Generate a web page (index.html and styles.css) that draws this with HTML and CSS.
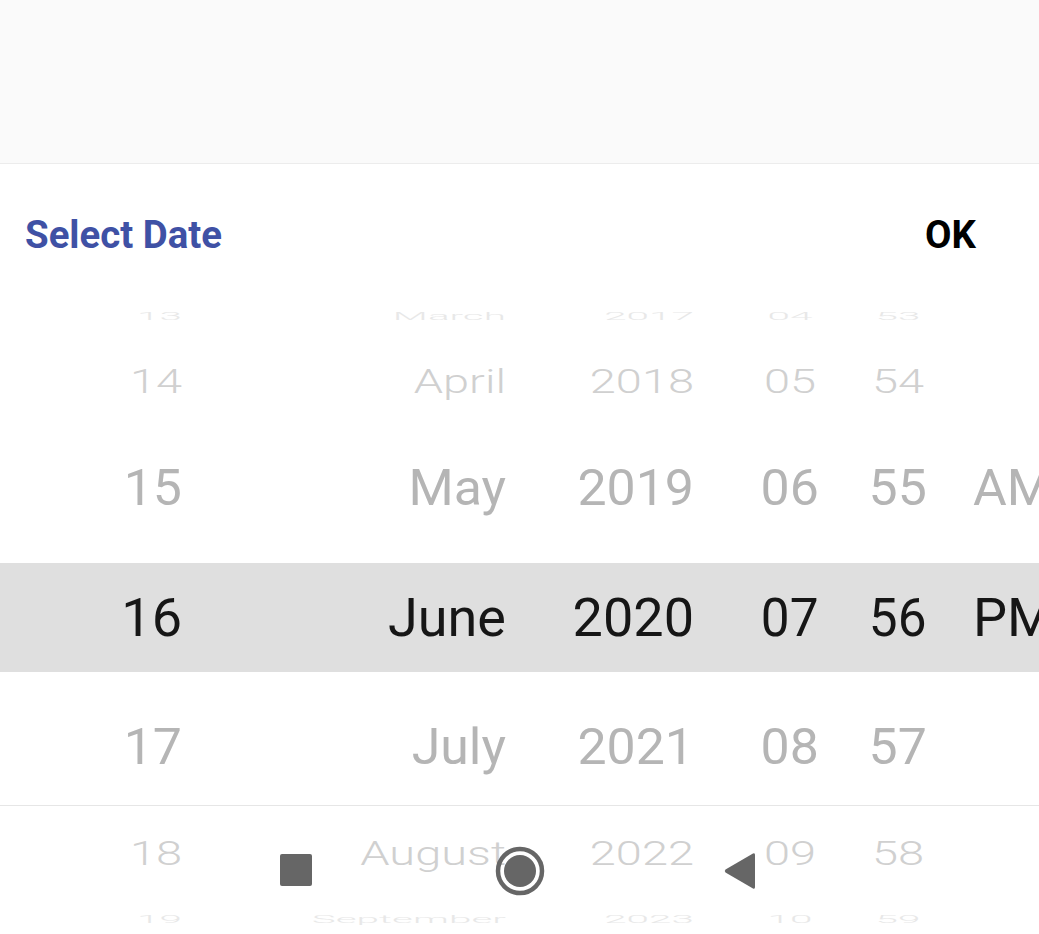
FILE: index.html
```html
<!DOCTYPE html>
<html lang="en">
<head>
  <meta charset="UTF-8">
  <meta name="viewport" content="width=device-width, initial-scale=1.0">
  <title>Select Date</title>
  <link rel="stylesheet" href="styles.css">
</head>
<body>
  <div class="backdrop"></div>
  <div class="sheet">
    <header class="sheet-header">
      <h2 class="sheet-title">Select Date</h2>
      <button class="ok-button">OK</button>
    </header>
    <div class="wheel">
      <div class="wheel-row far top">
        <span>13</span><span>March</span><span>2017</span><span>04</span><span>53</span><span></span>
      </div>
      <div class="wheel-row near top">
        <span>14</span><span>April</span><span>2018</span><span>05</span><span>54</span><span></span>
      </div>
      <div class="wheel-row close top">
        <span>15</span><span>May</span><span>2019</span><span>06</span><span>55</span><span>AM</span>
      </div>
      <div class="wheel-row current">
        <span>16</span><span>June</span><span>2020</span><span>07</span><span>56</span><span>PM</span>
      </div>
      <div class="wheel-row close bottom">
        <span>17</span><span>July</span><span>2021</span><span>08</span><span>57</span><span></span>
      </div>
      <div class="wheel-row near bottom">
        <span>18</span><span>August</span><span>2022</span><span>09</span><span>58</span><span></span>
      </div>
      <div class="wheel-row far bottom">
        <span>19</span><span>September</span><span>2023</span><span>10</span><span>59</span><span></span>
      </div>
    </div>
  </div>
  <nav class="nav-bar">
    <svg class="nav-square" width="32" height="32" viewBox="0 0 32 32"><rect width="32" height="32" rx="2" fill="#666"/></svg>
    <svg class="nav-circle" width="50" height="50" viewBox="0 0 50 50"><circle cx="25" cy="25" r="22" fill="none" stroke="#666" stroke-width="4.5"/><circle cx="25" cy="25" r="16" fill="#666"/></svg>
    <svg class="nav-back" width="32" height="38" viewBox="0 0 32 38"><path d="M29 1.5 Q31 0.5 31 3 V35 Q31 37.5 29 36.5 L1.5 20.5 Q0 19 1.5 17.5 Z" fill="#666"/></svg>
  </nav>
</body>
</html>
```

FILE: styles.css
```css
html, body {
  margin: 0;
  padding: 0;
  height: 934px;
  overflow: hidden;
  background-color: white;
  font-family: Roboto, sans-serif;
}
.backdrop {
  height: 163px;
  background-color: #fafafa;
  border-bottom: 1px solid #ececec;
}
.sheet-header {
  display: flex;
  align-items: center;
  justify-content: space-between;
  height: 119px;
  padding: 22px 63px 0 25px;
  box-sizing: border-box;
}
.sheet-title {
  margin: 0;
  font-size: 38.4px;
  font-weight: 700;
  color: #3f51a5;
}
.ok-button {
  padding: 0;
  border: none;
  background: none;
  font-family: inherit;
  font-size: 38.4px;
  font-weight: 700;
  color: black;
}
.wheel-row {
  display: grid;
  grid-template-columns: 182px 324px 188px 126px 108px 111px;
  align-items: center;
  font-size: 54px;
  white-space: nowrap;
}
.wheel-row span {
  display: block;
  text-align: right;
  transform-origin: right center;
}
/* hour and minute columns shrink around the middle of their two digits */
.wheel-row span:nth-child(4),
.wheel-row span:nth-child(5) {
  transform-origin: calc(100% - 30px) center;
}
.wheel-row span:last-child {
  padding-left: 45px;
  text-align: left;
  transform-origin: 45px center;
}
.wheel-row.far {
  color: #e8e8e8;
  font-weight: 300;
}
.wheel-row.far span {
  transform: scale(0.75, 0.2);
}
.wheel-row.near {
  color: #d0d0d0;
  font-weight: 300;
}
.wheel-row.near span {
  transform: scale(0.87, 0.6);
}
.wheel-row.close {
  color: #b5b5b5;
  height: 150px;
}
.wheel-row.close span {
  transform: translateY(-1px) scale(0.96, 0.92);
}
.wheel-row.current {
  height: 109px;
  background-color: #dfdfdf;
  color: #161616;
}
.wheel-row.current span:nth-child(4),
.wheel-row.current span:nth-child(5) {
  transform: scaleX(0.95);
}
.wheel-row.far.top {
  height: 66px;
}
.wheel-row.near.top {
  height: 64px;
}
.wheel-row.near.bottom {
  height: 62px;
}
.wheel-row.far.bottom {
  height: 70px;
}
.nav-bar {
  position: absolute;
  left: 0;
  right: 0;
  top: 805px;
  height: 129px;
  border-top: 1px solid #e6e6e6;
  box-sizing: border-box;
}
.nav-bar svg {
  position: absolute;
}
.nav-square {
  left: 280px;
  top: 48px;
}
.nav-circle {
  left: 495px;
  top: 40px;
}
.nav-back {
  left: 724px;
  top: 46px;
}
```
